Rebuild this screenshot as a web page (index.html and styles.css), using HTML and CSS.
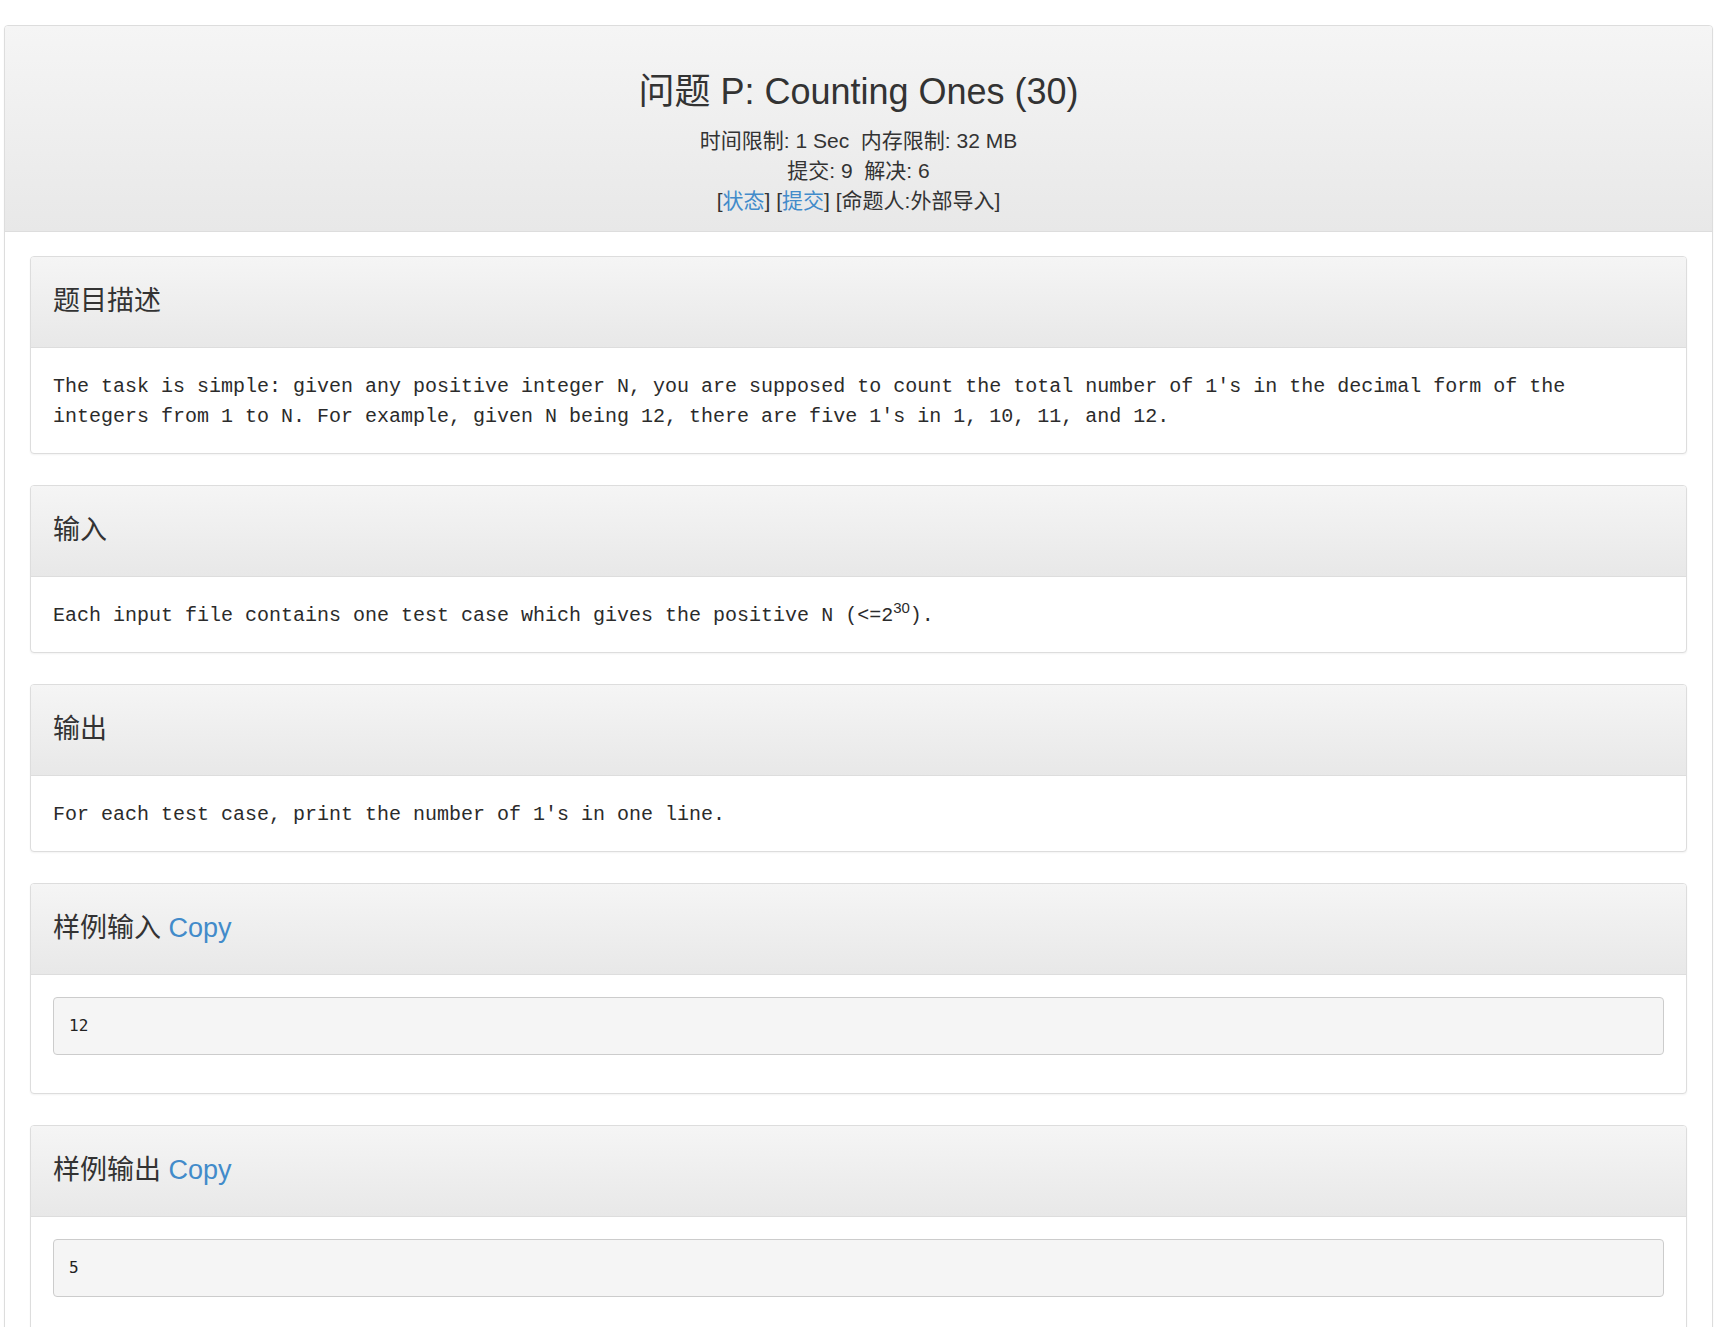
FILE: index.html
```html
<!DOCTYPE html>
<html lang="zh-CN">
<head>
<meta charset="utf-8">
<title>问题 P: Counting Ones (30)</title>
<link rel="stylesheet" href="styles.css">
</head>
<body>
<div class="page">
  <div class="outer">
    <div class="outer-heading">
      <h1 class="title">问题 P: Counting Ones (30)</h1>
      <div class="meta">时间限制: 1 Sec&nbsp;&nbsp;内存限制: 32 MB</div>
      <div class="meta">提交: 9&nbsp;&nbsp;解决: 6</div>
      <div class="meta">[<a class="link" href="#">状态</a>] [<a class="link" href="#">提交</a>] [命题人:外部导入]</div>
    </div>
    <div class="outer-body">
      <div class="card">
        <div class="card-heading">题目描述</div>
        <div class="card-body text-body">
          <p class="text">The task is simple: given any positive integer N, you are supposed to count the total number of 1's in the decimal form of the integers from 1 to N. For example, given N being 12, there are five 1's in 1, 10, 11, and 12.</p>
        </div>
      </div>
      <div class="card">
        <div class="card-heading">输入</div>
        <div class="card-body text-body">
          <p class="text">Each input file contains one test case which gives the positive N (&lt;=2<sup class="sup">30</sup>).</p>
        </div>
      </div>
      <div class="card">
        <div class="card-heading">输出</div>
        <div class="card-body text-body">
          <p class="text">For each test case, print the number of 1's in one line.</p>
        </div>
      </div>
      <div class="card">
        <div class="card-heading">样例输入 <a class="link" href="#">Copy</a></div>
        <div class="card-body">
          <pre class="sample">12</pre>
        </div>
      </div>
      <div class="card">
        <div class="card-heading">样例输出 <a class="link" href="#">Copy</a></div>
        <div class="card-body">
          <pre class="sample">5</pre>
        </div>
      </div>
    </div>
  </div>
</div>
</body>
</html>
```

FILE: styles.css
```css
html, body {
  margin: 0;
  padding: 0;
  background: #fff;
}

body {
  font-family: "Liberation Sans", "Noto Sans CJK SC", sans-serif;
  color: #333;
}

.page {
  padding: 25px 0 0 4px;
}

.outer {
  box-sizing: border-box;
  width: 1709px;
  border: 1px solid #ddd;
  border-radius: 4px;
  background: #fff;
  box-shadow: 0 1px 2px rgba(0, 0, 0, 0.05);
}

.outer-heading {
  padding: 46px 15px 15px;
  text-align: center;
  background: linear-gradient(to bottom, #f5f5f5 0%, #e8e8e8 100%);
  border-bottom: 1px solid #ddd;
  border-radius: 3px 3px 0 0;
}

.title {
  margin: 0 0 14px;
  font-size: 36px;
  font-weight: normal;
  line-height: 40px;
  color: #333;
}

.meta {
  font-size: 21px;
  line-height: 30px;
  color: #333;
}

.link {
  color: #428bca;
  text-decoration: none;
}

.outer-body {
  padding: 24px 25px 25px;
}

.card {
  border: 1px solid #ddd;
  border-radius: 4px;
  background: #fff;
  box-shadow: 0 1px 2px rgba(0, 0, 0, 0.05);
  margin-bottom: 31px;
  overflow: hidden;
}

.card-heading {
  padding: 27px 22px 28px;
  font-size: 27px;
  line-height: 35px;
  color: #333;
  background: linear-gradient(to bottom, #f5f5f5 0%, #e8e8e8 100%);
  border-bottom: 1px solid #ddd;
}

.card-body {
  padding: 22px;
}

.text-body {
  padding: 24px 22px 21px;
}

.text {
  margin: 0;
  font-family: "Liberation Mono", monospace;
  font-size: 20px;
  line-height: 30px;
  color: #2b2b2b;
}

.sup {
  font-family: "Liberation Sans", sans-serif;
  font-size: 15px;
  line-height: 0;
  vertical-align: 8px;
}

.sample {
  margin: 0 0 16px;
  padding: 17px 15px;
  font-family: "DejaVu Sans Mono", monospace;
  font-size: 16px;
  line-height: 22px;
  color: #222;
  background: #f5f5f5;
  border: 1px solid #ccc;
  border-radius: 4px;
}
```
